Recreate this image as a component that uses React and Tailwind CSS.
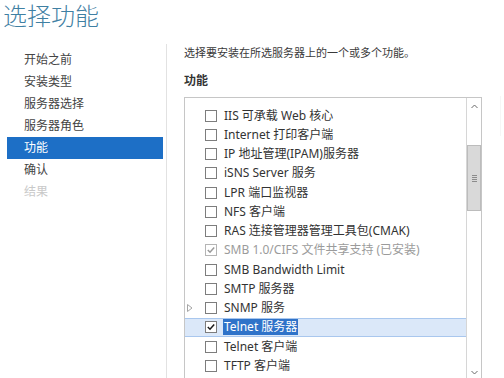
const navItems = [
  { label: "开始之前" },
  { label: "安装类型" },
  { label: "服务器选择" },
  { label: "服务器角色" },
  { label: "功能", active: true },
  { label: "确认" },
  { label: "结果", disabled: true },
];

const features = [
  { label: "IIS 可承载 Web 核心" },
  { label: "Internet 打印客户端" },
  { label: "IP 地址管理(IPAM)服务器" },
  { label: "iSNS Server 服务" },
  { label: "LPR 端口监视器" },
  { label: "NFS 客户端" },
  { label: "RAS 连接管理器管理工具包(CMAK)" },
  { label: "SMB 1.0/CIFS 文件共享支持 (已安装)", checked: true, disabled: true },
  { label: "SMB Bandwidth Limit" },
  { label: "SMTP 服务器" },
  { label: "SNMP 服务", expander: true },
  { label: "Telnet 服务器", checked: true, selected: true },
  { label: "Telnet 客户端" },
  { label: "TFTP 客户端" },
];

const Checkbox = ({ checked, disabled }) => (
  <div
    className={`w-[12px] h-[12px] border bg-white flex items-center justify-center ${
      disabled ? "border-[#b5b5b5]" : "border-[#7d7d7d]"
    }`}
  >
    {checked && (
      <svg width="10" height="10" viewBox="0 0 10 10">
        <path
          d="M1.8 5 L4 7.2 L8.2 2.4"
          fill="none"
          stroke={disabled ? "#9a9a9a" : "#1a1a1a"}
          strokeWidth="1.5"
        />
      </svg>
    )}
  </div>
);

const FeatureRow = ({ item }) => (
  <div
    className={`flex items-center h-[19.25px] ${
      item.selected ? "bg-[#dbe8f9] border-y border-[#a9c7ee]" : ""
    }`}
  >
    <div className="w-[20px] flex items-center justify-start pl-[2px]">
      {item.expander && (
        <svg width="6" height="8" viewBox="0 0 6 8">
          <path d="M0.5 0.5 L5 4 L0.5 7.5 Z" fill="none" stroke="#a6a6a6" />
        </svg>
      )}
    </div>
    <Checkbox checked={item.checked} disabled={item.disabled} />
    <span
      className={`ml-[6px] whitespace-nowrap leading-[16px] px-[1px] ${
        item.selected
          ? "bg-[#2f73c9] text-white"
          : item.disabled
          ? "text-[#9b9b9b]"
          : "text-[#333333]"
      }`}
    >
      {item.label}
    </span>
  </div>
);

const App = () => {
  return (
    <div
      className="w-[504px] h-[378px] overflow-hidden bg-white relative"
      style={{ fontFamily: '"Noto Sans", "Noto Sans CJK SC", sans-serif' }}
    >
      {/* Title */}
      <div className="h-[44px] pl-[3px] pt-[1px] text-[24px] font-light leading-[30px] text-[#3f80a3]">
        选择功能
      </div>

      <div className="flex">
        {/* Left navigation */}
        <div className="w-[167px] h-[340px] border-r border-[#e2e2e2] pt-[5px] pl-[7px] pr-[3px]">
          {navItems.map((item) => (
            <div
              key={item.label}
              className={`h-[22px] leading-[22px] pl-[17px] text-[12px] ${
                item.active
                  ? "bg-[#1d6fc6] text-white"
                  : item.disabled
                  ? "text-[#c9c9c9]"
                  : "text-[#444444]"
              }`}
            >
              {item.label}
            </div>
          ))}
        </div>

        {/* Right content */}
        <div className="flex-1 pl-[17px] relative">
          <div className="text-[11px] leading-[14px] pt-[2px] text-[#3a3a3a]">
            选择要安装在所选服务器上的一个或多个功能。
          </div>
          <div className="mt-[14px] text-[12px] leading-[14px] font-bold text-[#333333]">
            功能
          </div>

          <div className="mt-[9px] w-[298px] h-[290px] border border-[#c6c6c6] flex">
            {/* List */}
            <div className="flex-1 pt-[8px] text-[12px]">
              {features.map((item) => (
                <FeatureRow key={item.label} item={item} />
              ))}
            </div>

            {/* Scrollbar */}
            <div className="w-[15px] border-l border-[#d6d6d6] flex flex-col">
              <div className="h-[16px] flex items-center justify-center">
                <svg width="7" height="5" viewBox="0 0 7 5">
                  <path d="M0.5 4 L3.5 1 L6.5 4" fill="none" stroke="#6b6b6b" />
                </svg>
              </div>
              <div className="flex-1 pt-[31px]">
                <div className="h-[66px] bg-[#d9d9d9] border border-[#bcbcbc] flex items-center justify-center">
                  <div className="flex flex-col gap-[1px]">
                    <div className="w-[5px] h-[1px] bg-[#8c8c8c]"></div>
                    <div className="w-[5px] h-[1px] bg-[#8c8c8c]"></div>
                    <div className="w-[5px] h-[1px] bg-[#8c8c8c]"></div>
                    <div className="w-[5px] h-[1px] bg-[#8c8c8c]"></div>
                  </div>
                </div>
              </div>
              <div className="h-[20px] flex items-start justify-center pt-[4px]">
                <svg width="7" height="5" viewBox="0 0 7 5">
                  <path d="M0.5 1 L3.5 4 L6.5 1" fill="none" stroke="#6b6b6b" />
                </svg>
              </div>
            </div>
          </div>

          {/* faint edge of neighbouring panel */}
          <div className="absolute left-[333px] top-[52px] w-[1px] h-[40px] bg-[#f6f6f6]"></div>
        </div>
      </div>
    </div>
  );
};

export default App;
